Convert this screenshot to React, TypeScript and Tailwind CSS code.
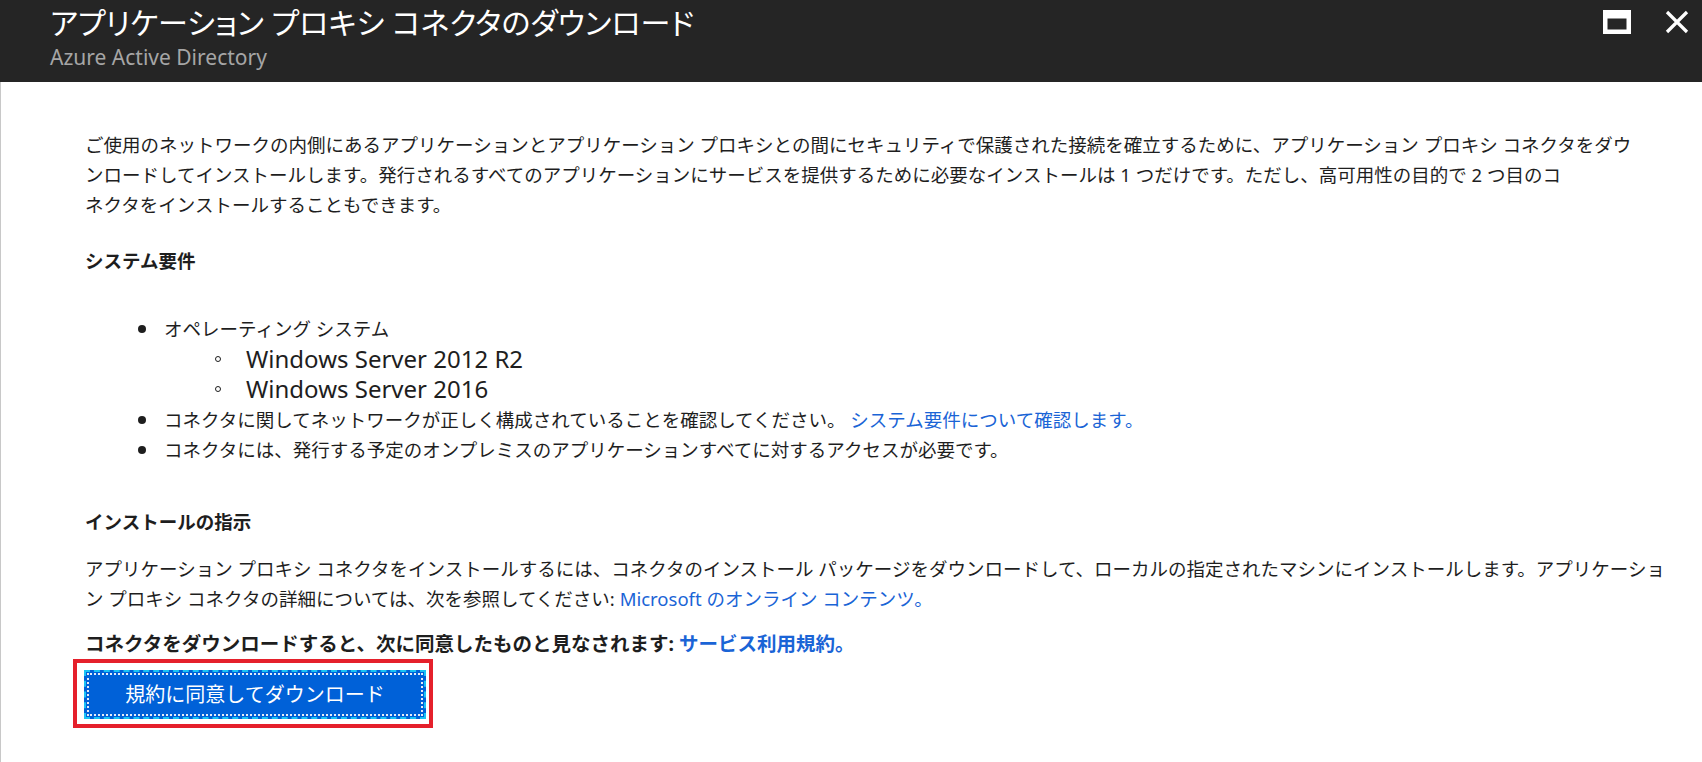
import React from 'react';

const A: React.FC<{ children: React.ReactNode }> = ({ children }) => (
  <a className="text-[#1a64d6] cursor-pointer">{children}</a>
);

const Dot = () => <span className="w-[8px] h-[8px] rounded-full bg-[#1e1e1e] shrink-0 mr-[18px]" />;
const Ring = () => <span className="w-[6px] h-[6px] rounded-full border border-[#1e1e1e] shrink-0 mr-[25px]" />;

export default function App() {
  return (
    <div className="min-h-screen bg-white font-['Noto_Sans','Noto_Sans_CJK_JP',sans-serif] text-[#1e1e1e]">
      {/* blade header */}
      <header className="h-[82px] bg-[#252525] flex items-start justify-between pl-[50px] pr-[13px]">
        <div className="pt-[4px]">
          <h1 className="text-[30px] leading-[38px] text-white [font-feature-settings:'palt']">アプリケーション プロキシ コネクタのダウンロード</h1>
          <div className="text-[21px] leading-[24px] text-[#a6a6a6] mt-[3px]">Azure Active Directory</div>
        </div>
        <div className="flex items-center gap-[34px] pt-[10px]">
          <svg width="28" height="24" viewBox="0 0 28 24">
            <path fillRule="evenodd" fill="#fff" d="M0 0h28v24H0z M4.5 8.5h19v11h-19z" />
          </svg>
          <svg width="24" height="24" viewBox="0 0 24 24" stroke="#fff" strokeWidth="3.2">
            <path d="M2 2l20 20M22 2L2 22" />
          </svg>
        </div>
      </header>

      {/* content */}
      <main className="border-l border-[#c8c8c8] min-h-[680px] pl-[84px] pr-[20px] pt-[48px] pb-[30px] text-[18.5px] leading-[30px]">
        <p>
          ご使用のネットワークの内側にあるアプリケーションとアプリケーション プロキシとの間にセキュリティで保護された接続を確立するために、アプリケーション プロキシ コネクタをダウ<br />
          ンロードしてインストールします。発行されるすべてのアプリケーションにサービスを提供するために必要なインストールは 1 つだけです。ただし、高可用性の目的で 2 つ目のコ<br />
          ネクタをインストールすることもできます。
        </p>

        <h2 className="mt-[26px] font-bold">システム要件</h2>

        <ul className="mt-[38px]">
          <li className="flex items-center pl-[53px]"><Dot />オペレーティング システム</li>
          <li className="flex items-center pl-[130px] text-[24px]"><Ring />Windows Server 2012 R2</li>
          <li className="flex items-center pl-[130px] text-[24px]"><Ring />Windows Server 2016</li>
          <li className="flex items-center pl-[53px] mt-[1px]">
            <Dot />
            <span>コネクタに関してネットワークが正しく構成されていることを確認してください。 <A>システム要件について確認します。</A></span>
          </li>
          <li className="flex items-center pl-[53px]"><Dot />コネクタには、発行する予定のオンプレミスのアプリケーションすべてに対するアクセスが必要です。</li>
        </ul>

        <h2 className="mt-[42px] font-bold">インストールの指示</h2>

        <p className="mt-[17px]">
          アプリケーション プロキシ コネクタをインストールするには、コネクタのインストール パッケージをダウンロードして、ローカルの指定されたマシンにインストールします。アプリケーショ<br />
          ン プロキシ コネクタの詳細については、次を参照してください: <A>Microsoft のオンライン コンテンツ。</A>
        </p>

        <p className="mt-[15px] font-bold text-[19.5px]">
          コネクタをダウンロードすると、次に同意したものと見なされます: <A>サービス利用規約。</A>
        </p>

        <div className="ml-[-12px] inline-block border-4 border-[#e5202b] pl-[7px] pt-[7px] pr-[3px] pb-[5px]">
          <button className="w-[342px] h-[49px] bg-[#0061d8] border-2 border-dashed border-[#19c3f5] p-[3px]">
            <span className="flex items-center justify-center w-full h-full outline-2 outline-dotted outline-[#e6ecf7] text-white text-[20px] leading-none">
              規約に同意してダウンロード
            </span>
          </button>
        </div>
      </main>
    </div>
  );
}
